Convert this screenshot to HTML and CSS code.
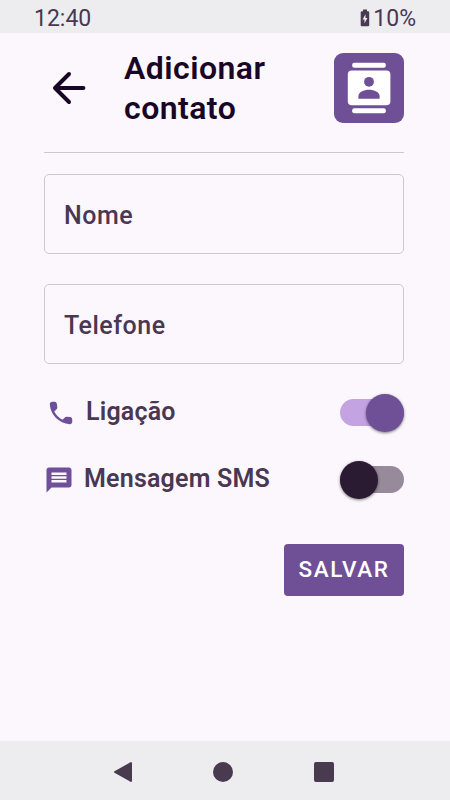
FILE: index.html
```html
<!DOCTYPE html>
<html lang="pt-BR">
<head>
    <meta charset="UTF-8">
    <meta name="viewport" content="width=device-width, initial-scale=1.0">
    <title>Adicionar contato</title>
    <link rel="stylesheet" href="styles.css">
</head>
<body>
    <div class="status-bar">
        <span class="clock">12:40</span>
        <div class="battery">
            <svg width="10" height="18" viewBox="0 0 10 18">
                <path fill="#4a3a50" d="M3 0.5h4v1.700h1.200q1 0 1 1v13q0 1-1 1H1.700q-1 0-1-1v-13q0-1 1-1H3z"/>
                <path fill="#ededef" d="M5.500 5.200L2.600 10.400h1.900v3.900l2.900-5.200H5.500z"/>
            </svg>
            <span>10%</span>
        </div>
    </div>

    <main class="content">
        <header class="header">
            <svg class="back" width="34" height="34" viewBox="0 0 34 34">
                <path d="M31.400 17H3.500M17 3L3 17l14 14" fill="none" stroke="#190626" stroke-width="4" stroke-linecap="round" stroke-linejoin="round"/>
            </svg>
            <h1>Adicionar contato</h1>
            <svg class="logo" width="70" height="70" viewBox="0 0 70 70">
                <rect width="70" height="70" rx="9" fill="#6f5097"/>
                <g fill="#fff">
                    <rect x="18.200" y="9.800" width="33.600" height="5" rx="2"/>
                    <rect x="13.800" y="17.600" width="42.600" height="34.600" rx="4"/>
                    <rect x="18.200" y="55.300" width="33.600" height="5" rx="2"/>
                </g>
                <g fill="#6f5097">
                    <circle cx="35" cy="28.800" r="4.900"/>
                    <path d="M24.400 45.800v-2.600c0-4 5.400-6.400 10.600-6.400s10.600 2.400 10.600 6.400v2.600z"/>
                </g>
            </svg>
        </header>

        <form class="form">
            <input type="text" placeholder="Nome">
            <input type="tel" placeholder="Telefone">

            <div class="option option-call">
                <svg width="30" height="30" viewBox="0 0 24 24">
                    <path fill="#6f4f9b" d="M19.230 15.260l-2.540-.29a1.990 1.990 0 0 0-1.640.57l-1.840 1.840a15.050 15.050 0 0 1-6.590-6.590l1.850-1.850c.43-.43.64-1.030.57-1.640l-.29-2.520a2 2 0 0 0-1.990-1.770H5.030c-1.130 0-2.070.94-2 2.070.53 8.540 7.360 15.360 15.890 15.890 1.130.07 2.070-.87 2.070-2v-1.730c.01-1.010-.75-1.860-1.760-1.980z"/>
                </svg>
                <span>Ligação</span>
                <div class="switch switch-on"><div class="thumb"></div></div>
            </div>

            <div class="option option-sms">
                <svg width="30" height="30" viewBox="0 0 24 24">
                    <path fill="#6f4f9b" d="M20 2H4c-1.100 0-2 .9-2 2v18l4-4h14c1.100 0 2-.9 2-2V4c0-1.100-.9-2-2-2zm-2 12H6v-2h12v2zm0-3H6V9h12v2zm0-3H6V6h12v2z"/>
                </svg>
                <span>Mensagem SMS</span>
                <div class="switch switch-off"><div class="thumb"></div></div>
            </div>

            <button type="button">SALVAR</button>
        </form>
    </main>

    <div class="nav-bar">
        <svg width="20" height="22" viewBox="0 0 20 22">
            <path d="M18 2v18L2 11z" fill="#4a3a50" stroke="#4a3a50" stroke-width="2" stroke-linejoin="round"/>
        </svg>
        <div class="home"></div>
        <div class="recent"></div>
    </div>
</body>
</html>
```
FILE: styles.css
```css
* {
    box-sizing: border-box;
}
body {
    margin: 0;
    height: 100vh;
    display: flex;
    flex-direction: column;
    background-color: #fbf7fd;
    color: #4a3752;
    font-family: Roboto, sans-serif;
    overflow: hidden;
}
svg {
    display: block;
    flex-shrink: 0;
}
.status-bar {
    height: 33px;
    padding: 3px 34px 0 34px;
    display: flex;
    justify-content: space-between;
    align-items: center;
    background-color: #ededef;
    font-size: 23px;
}
.battery {
    display: flex;
    align-items: center;
    gap: 3px;
}
.content {
    flex: 1;
    padding: 0 46.5px 0 44px;
}
.header {
    height: 120px;
    padding-top: 20px;
    display: flex;
    align-items: flex-start;
    border-bottom: 1px solid #cdc7d0;
}
.back {
    margin: 18px 0 0 7.5px;
}
h1 {
    flex: 1;
    margin: -5px 0 0 38.5px;
    color: #190626;
    font-size: 32px;
    line-height: 40px;
    font-weight: 600;
    letter-spacing: 0.45px;
}
.form {
    display: flex;
    flex-direction: column;
    padding-top: 21px;
}
input {
    width: 100%;
    height: 80px;
    margin: 0 0 30px;
    padding: 2px 19px 0;
    border: 1px solid #cdc7d0;
    border-radius: 5px;
    background: transparent;
    font-family: inherit;
    font-size: 25px;
    font-weight: 500;
    letter-spacing: 0.5px;
}
input::placeholder {
    color: #4a3752;
    opacity: 1;
}
.option {
    display: flex;
    align-items: center;
    height: 38px;
    font-size: 25px;
    font-weight: 600;
    letter-spacing: 0.2px;
}
.option span {
    margin: -2px 0 0 10px;
}
.option-call {
    margin-top: -0.5px;
    padding-left: 2px;
}
.option-sms {
    margin-top: 29px;
}
.switch {
    width: 64px;
    height: 27px;
    margin-left: auto;
    display: flex;
    align-items: center;
    border-radius: 14px;
}
.thumb {
    width: 38px;
    height: 38px;
    flex-shrink: 0;
    border-radius: 50%;
    box-shadow: 0 1px 3px rgba(0, 0, 0, 0.5);
}
.switch-on {
    justify-content: flex-end;
    background-color: #c4a3e2;
}
.switch-on .thumb {
    background-color: #6f5097;
}
.switch-off {
    background-color: #968a9b;
}
.switch-off .thumb {
    background-color: #2b1b32;
}
button {
    align-self: flex-end;
    width: 120px;
    height: 52.5px;
    margin-top: 45px;
    padding: 0 0 1px 1px;
    border: none;
    border-radius: 4px;
    background-color: #6f5097;
    color: white;
    font-family: inherit;
    font-size: 22.5px;
    font-weight: 500;
    letter-spacing: 1.6px;
}
.nav-bar {
    height: 59px;
    padding: 2px 116.5px 0 112.5px;
    display: flex;
    justify-content: space-between;
    align-items: center;
    background-color: #ededef;
}
.home {
    width: 20px;
    height: 20px;
    border-radius: 50%;
    background-color: #4a3a50;
}
.recent {
    width: 20px;
    height: 20px;
    border-radius: 2px;
    background-color: #4a3a50;
}
```
